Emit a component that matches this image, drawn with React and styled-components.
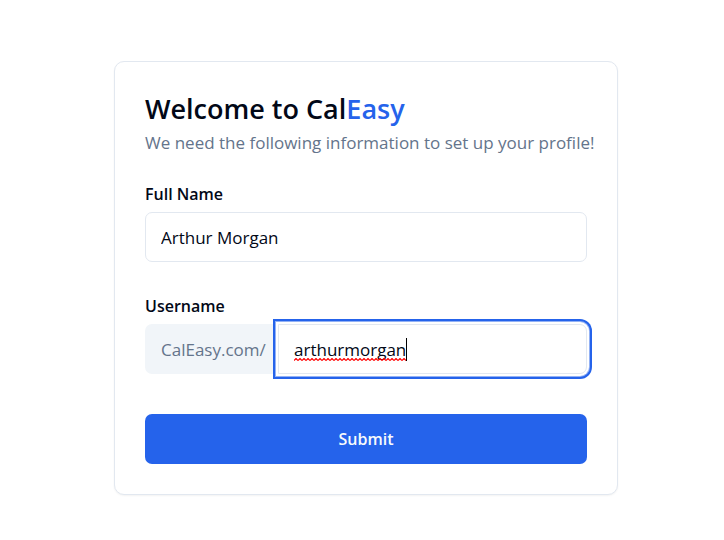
import React, { useState } from "react";
import styled, { createGlobalStyle, css } from "styled-components";

const colors = {
  ink: "#020817",
  muted: "#64748b",
  line: "#e2e8f0",
  tint: "#f1f5f9",
  blue: "#2563eb",
};

const GlobalStyle = createGlobalStyle`
  *, *::before, *::after { box-sizing: border-box; }
  body {
    margin: 0;
    background: #ffffff;
    color: ${colors.ink};
    font-family: "Segoe UI", "Open Sans", "Noto Sans", sans-serif;
    font-size: 17px;
  }
`;

const Page = styled.main`
  display: flex;
  align-items: center;
  justify-content: center;
  min-height: 100vh;
  padding: 16px 0 0 8px;
`;

const Card = styled.section`
  width: 100%;
  max-width: 504px;
  padding: 30px;
  border: 1px solid ${colors.line};
  border-radius: 10px;
  background: #ffffff;
  box-shadow: 0 1px 2px rgba(0, 0, 0, 0.05);
`;

const Header = styled.header`
  display: flex;
  flex-direction: column;
  gap: 4px;
  margin-bottom: 26px;
`;

const Title = styled.h1`
  margin: 0;
  font-size: 27px;
  line-height: 34px;
  font-weight: 600;
`;

const Accent = styled.span`
  color: ${colors.blue};
`;

const Subtitle = styled.p`
  margin: 0;
  line-height: 26px;
  color: ${colors.muted};

  @media (min-width: 520px) {
    white-space: nowrap;
  }
`;

const Form = styled.form`
  display: flex;
  flex-direction: column;
  gap: 32px;
`;

const Field = styled.div`
  display: flex;
  flex-direction: column;
  gap: 6px;
`;

const Label = styled.label`
  font-size: 16px;
  line-height: 24px;
  font-weight: 600;
`;

const focusRing = css`
  box-shadow: 0 0 0 2px #ffffff, 0 0 0 3px #92b1f5, 0 0 0 5px ${colors.blue};
`;

const TextInput = styled.input`
  width: 100%;
  height: 50px;
  padding: 0 15px;
  border: 1px solid ${colors.line};
  border-radius: ${(p) => (p.$joined ? "0 7px 7px 0" : "7px")};
  outline: none;
  background: #ffffff;
  color: ${colors.ink};
  font: inherit;
  ${(p) => p.$focused && focusRing}
  ${(p) => p.$focused && "caret-color: transparent;"}
`;

const InputGroup = styled.div`
  display: flex;
`;

const Prefix = styled.span`
  display: flex;
  align-items: center;
  flex: 0 0 133px;
  padding-left: 16px;
  border-radius: 7px 0 0 7px;
  background: ${colors.tint};
  color: ${colors.muted};
`;

const InputWrap = styled.div`
  position: relative;
  flex: 1;
  min-width: 0;
`;

/* Lies over the input; its invisible copy of the text gives the marks their width. */
const Marks = styled.span`
  position: absolute;
  top: 14px;
  left: 16px;
  height: 23px;
  border-right: 1px solid #000000;
  pointer-events: none;
`;

const Ghost = styled.span`
  visibility: hidden;
`;

const Squiggle = styled.svg`
  position: absolute;
  left: 0;
  bottom: 0;
  width: 100%;
  height: 3px;
`;

const SubmitButton = styled.button`
  height: 50px;
  margin-top: 8px;
  border: 0;
  border-radius: 7px;
  background: ${colors.blue};
  color: #f8fafc;
  font: inherit;
  font-size: 16px;
  font-weight: 600;
  cursor: pointer;
`;

export default function App() {
  const [fullName, setFullName] = useState("Arthur Morgan");
  const [username, setUsername] = useState("arthurmorgan");

  return (
    <>
      <GlobalStyle />
      <Page>
        <Card>
          <Header>
            <Title>
              Welcome to Cal<Accent>Easy</Accent>
            </Title>
            <Subtitle>We need the following information to set up your profile!</Subtitle>
          </Header>
          <Form onSubmit={(e) => e.preventDefault()}>
            <Field>
              <Label htmlFor="fullName">Full Name</Label>
              <TextInput
                id="fullName"
                type="text"
                value={fullName}
                onChange={(e) => setFullName(e.target.value)}
              />
            </Field>
            <Field>
              <Label htmlFor="username">Username</Label>
              <InputGroup>
                <Prefix>CalEasy.com/</Prefix>
                <InputWrap>
                  <TextInput
                    id="username"
                    type="text"
                    spellCheck={false}
                    $joined
                    $focused
                    value={username}
                    onChange={(e) => setUsername(e.target.value)}
                  />
                  <Marks aria-hidden="true">
                    <Ghost>{username}</Ghost>
                    <Squiggle>
                      <defs>
                        <pattern id="wave" width="4" height="3" patternUnits="userSpaceOnUse">
                          <path d="M0 2.5 L2 0.5 L4 2.5" fill="none" stroke="#ff0000" strokeWidth="1.2" />
                        </pattern>
                      </defs>
                      <rect width="100%" height="3" fill="url(#wave)" />
                    </Squiggle>
                  </Marks>
                </InputWrap>
              </InputGroup>
            </Field>
            <SubmitButton type="submit">Submit</SubmitButton>
          </Form>
        </Card>
      </Page>
    </>
  );
}
